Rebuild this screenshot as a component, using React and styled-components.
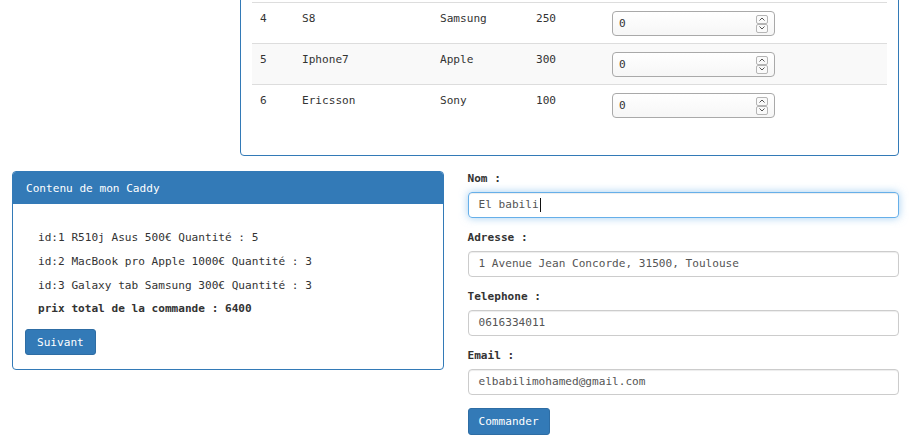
import styled, { createGlobalStyle } from 'styled-components';

const GlobalStyle = createGlobalStyle`
  body {
    margin: 0;
    background: #fff;
    font-family: "DejaVu Sans Mono", "Liberation Mono", monospace;
    font-size: 11.1px;
    color: #333;
    overflow: hidden;
  }
`;

const Page = styled.div`
  padding: 0 10px 0 12px;
`;

const ProductPanel = styled.section`
  margin: -30px 0 0 228px;
  border: 1px solid #337ab7;
  border-radius: 4px;
  padding: 31px 11px 30px;
`;

const Table = styled.table`
  width: 100%;
  border-collapse: collapse;
  table-layout: fixed;
`;

const Row = styled.tr`
  background: ${(p) => (p.$striped ? '#f9f9f9' : '#fff')};
  border-top: 1px solid #ddd;
`;

const Cell = styled.td`
  padding: 8px 8px 7px;
  line-height: 16px;
  vertical-align: top;
  width: ${(p) => p.$w || 'auto'};
`;

const QtyBox = styled.div`
  width: 163px;
  height: 25px;
  box-sizing: border-box;
  border: 1px solid #a9a9a9;
  border-radius: 4px;
  background: linear-gradient(#fff, #f6f6f6);
  display: flex;
  align-items: center;
  justify-content: space-between;
  padding: 0 6px;
  color: #333;
`;

const Spinner = styled.div`
  display: flex;
  flex-direction: column;
`;

const SpinBtn = styled.span`
  width: 12px;
  height: 9px;
  box-sizing: border-box;
  border: 1px solid #b5b5b5;
  border-radius: 2px;
  background: #fafafa;
  display: flex;
  align-items: center;
  justify-content: center;
`;

const Columns = styled.div`
  display: grid;
  grid-template-columns: 1fr 1fr;
  gap: 24px;
  margin-top: 15px;
  align-items: start;
`;

const CartPanel = styled.section`
  border: 1px solid #337ab7;
  border-radius: 4px;
  overflow: hidden;
`;

const CartHeading = styled.div`
  background: #337ab7;
  color: #fff;
  padding: 10px 13px 9px;
  line-height: 13px;
`;

const CartBody = styled.div`
  padding: 15px 12px 14px;
`;

const CartList = styled.div`
  padding: 7px 0 0 13px;
`;

const CartLine = styled.div`
  line-height: 23.8px;
  font-weight: ${(p) => (p.$bold ? 'bold' : 'normal')};
`;

const Button = styled.button`
  font-family: inherit;
  font-size: 11.1px;
  color: #fff;
  background: #337ab7;
  border: 1px solid #2e6da4;
  border-radius: 3px;
  height: ${(p) => p.$h || 26}px;
  padding: 0 ${(p) => p.$px || 11}px;
  margin-top: ${(p) => p.$mt || 0}px;
  cursor: pointer;
`;

const Form = styled.form`
  display: flex;
  flex-direction: column;
  align-items: flex-start;
`;

const Group = styled.div`
  width: 100%;
  margin-bottom: 12px;
`;

const Label = styled.label`
  display: block;
  font-weight: bold;
  line-height: 15px;
  margin-bottom: 6px;
`;

const Field = styled.div`
  height: 26px;
  box-sizing: border-box;
  border: 1px solid ${(p) => (p.$focused ? '#66afe9' : '#ccc')};
  border-radius: 4px;
  padding: 0 10px;
  line-height: 24px;
  color: #555;
  display: flex;
  align-items: center;
  box-shadow: ${(p) =>
    p.$focused
      ? 'inset 0 1px 1px rgba(0,0,0,.075), 0 0 8px rgba(102,175,233,.6)'
      : 'inset 0 1px 1px rgba(0,0,0,.075)'};
`;

const Caret = styled.span`
  display: inline-block;
  width: 1px;
  height: 14px;
  background: #111;
  margin-left: 1px;
`;

const Chevron = ({ up }) => (
  <svg width="6" height="4" viewBox="0 0 6 4">
    <polyline
      points={up ? '0.5,3.5 3,1 5.5,3.5' : '0.5,0.5 3,3 5.5,0.5'}
      fill="none"
      stroke="#555"
      strokeWidth="1"
    />
  </svg>
);

const products = [
  { id: 4, name: 'S8', brand: 'Samsung', price: 250 },
  { id: 5, name: 'Iphone7', brand: 'Apple', price: 300 },
  { id: 6, name: 'Ericsson', brand: 'Sony', price: 100 },
];

const cart = [
  'id:1 R510j Asus 500€ Quantité : 5',
  'id:2 MacBook pro Apple 1000€ Quantité : 3',
  'id:3 Galaxy tab Samsung 300€ Quantité : 3',
];

const fields = [
  { label: 'Nom :', value: 'El babili', focused: true },
  { label: 'Adresse :', value: '1 Avenue Jean Concorde, 31500, Toulouse' },
  { label: 'Telephone :', value: '0616334011' },
  { label: 'Email :', value: 'elbabilimohamed@gmail.com' },
];

const App = () => {
  return (
    <Page>
      <GlobalStyle />
      <ProductPanel>
        <Table>
          <tbody>
            {products.map((p, i) => (
              <Row key={p.id} $striped={i === 1}>
                <Cell $w="26px">{p.id}</Cell>
                <Cell $w="122px">{p.name}</Cell>
                <Cell $w="80px">{p.brand}</Cell>
                <Cell $w="60px">{p.price}</Cell>
                <Cell>
                  <QtyBox>
                    <span>0</span>
                    <Spinner>
                      <SpinBtn><Chevron up /></SpinBtn>
                      <SpinBtn><Chevron /></SpinBtn>
                    </Spinner>
                  </QtyBox>
                </Cell>
              </Row>
            ))}
          </tbody>
        </Table>
      </ProductPanel>

      <Columns>
        <CartPanel>
          <CartHeading>Contenu de mon Caddy</CartHeading>
          <CartBody>
            <CartList>
              {cart.map((line) => (
                <CartLine key={line}>{line}</CartLine>
              ))}
              <CartLine $bold>prix total de la commande : 6400</CartLine>
            </CartList>
            <Button type="button" $mt={8}>Suivant</Button>
          </CartBody>
        </CartPanel>

        <Form onSubmit={(e) => e.preventDefault()}>
          {fields.map((f) => (
            <Group key={f.label}>
              <Label>{f.label}</Label>
              <Field $focused={f.focused}>
                {f.value}
                {f.focused && <Caret />}
              </Field>
            </Group>
          ))}
          <Button type="submit" $h={27} $px={10} $mt={1}>Commander</Button>
        </Form>
      </Columns>
    </Page>
  );
};

export default App;
